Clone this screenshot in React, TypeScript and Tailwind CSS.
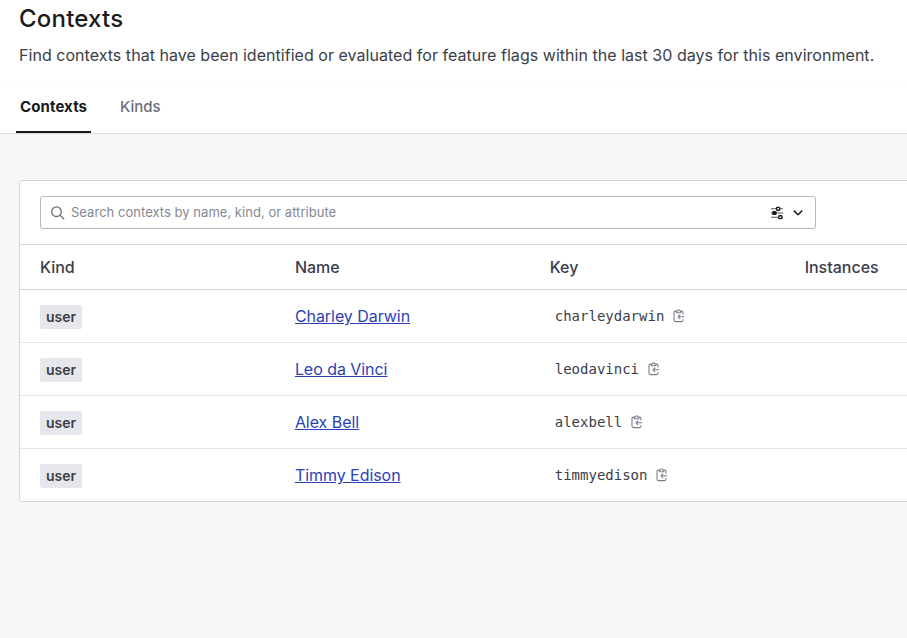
import React from "react";

const contexts = [
  { kind: "user", name: "Charley Darwin", key: "charleydarwin" },
  { kind: "user", name: "Leo da Vinci", key: "leodavinci" },
  { kind: "user", name: "Alex Bell", key: "alexbell" },
  { kind: "user", name: "Timmy Edison", key: "timmyedison" },
];

function SearchIcon() {
  return (
    <svg className="h-4 w-4 shrink-0 text-[#6c6e79]" viewBox="0 0 16 16" fill="none" stroke="currentColor" strokeWidth="1.3">
      <circle cx="6.5" cy="6.7" r="4.8" />
      <path d="M10 10.2 14.2 14.4" />
    </svg>
  );
}

function FilterIcon() {
  return (
    <svg className="h-3.5 w-3.5" viewBox="0 0 14 14" fill="none" stroke="#1d1d1f" strokeWidth="1.1">
      <path d="M1 2.8h5.2M9.8 2.8H13M1 7h12M1 11.2h7.2M11.8 11.2H13" strokeOpacity="0.75" />
      <rect x="6.6" y="1.4" width="3" height="2.8" rx="0.6" strokeWidth="1.4" />
      <rect x="2.2" y="5" width="4.4" height="4" rx="1" fill="#1d1d1f" stroke="none" />
      <rect x="8.8" y="9.8" width="3" height="2.8" rx="0.6" strokeWidth="1.4" />
    </svg>
  );
}

function ChevronIcon() {
  return (
    <svg className="h-3 w-3" viewBox="0 0 12 12" fill="none" stroke="#1d1d1f" strokeWidth="1.5">
      <path d="m1.8 3.6 4.2 4.2 4.2-4.2" />
    </svg>
  );
}

function CopyIcon() {
  return (
    <svg className="h-[14px] w-[12px]" viewBox="0 0 12 14" fill="none" stroke="#7d7f8b" strokeWidth="1.1" strokeLinecap="round" strokeLinejoin="round">
      <path d="M3.3 2.1h-.8C1.6 2.1 1 2.7 1 3.6v7.5c0 .9.6 1.5 1.5 1.5h6c.9 0 1.5-.6 1.5-1.5v-.6M8 2.1h.5c.9 0 1.5.6 1.5 1.5v1.3" />
      <path d="M3.5 2h1c.1-.8.5-1.2 1.1-1.2S6.6 1.2 6.7 2h1v1.8H3.5z" />
      <path d="M10.8 7.8H5M6.8 6 5 7.8l1.8 1.8" />
    </svg>
  );
}

export default function App() {
  return (
    <div className="flex h-[638px] w-full flex-col overflow-hidden bg-[#f7f7f7] font-['Inter',sans-serif] text-[#3b3d47]">
      <header className="h-[134px] shrink-0 border-b border-[#dadbdd] bg-white">
        <h1 className="h-[41px] pl-[19px] pt-[5px] text-2xl leading-7 font-medium tracking-[0.2px] text-[#1b1b1d]">Contexts</h1>
        <p className="h-[42px] border-b border-[#fbfbfb] pl-[19px] pt-0.5 text-base leading-6 tracking-[0.035px] whitespace-nowrap">
          Find contexts that have been identified or evaluated for feature flags within the last 30 days for this environment.
        </p>
        <nav className="flex h-[50px] gap-[25px] pl-4 text-[15px] leading-5">
          <a className="w-[75px] border-b-2 border-[#18191b] pl-1 pt-3.5 font-bold tracking-[0.1px] text-[#18191b]">Contexts</a>
          <a className="pl-1 pt-3.5 font-medium text-[#6c6e7b]">Kinds</a>
        </nav>
      </header>

      <main className="pl-[19px] pt-[46px]">
        <section className="w-[1041.5px] rounded-[3px] border border-[#d4d5d9] bg-white">
          <div className="h-16 border-b border-[#d4d5d9] pl-5 pt-[15px]">
            <div className="flex h-[33px] w-[776px] items-center rounded-[3px] border border-[#b7b9c1] pl-[9px] pr-[11px]">
              <SearchIcon />
              <span className="-mt-px ml-[5px] flex-1 text-[13px] leading-5 tracking-[0.03px] text-[#858792]">Search contexts by name, kind, or attribute</span>
              <FilterIcon />
              <span className="ml-2"><ChevronIcon /></span>
            </div>
          </div>
          <div className="grid h-[45px] grid-cols-4 items-center border-b border-[#d4d5d9] pl-5 text-base font-medium">
            <span>Kind</span>
            <span>Name</span>
            <span>Key</span>
            <span>Instances</span>
          </div>
          {contexts.map((context) => (
            <div key={context.key} className="grid h-[53px] grid-cols-4 items-center border-b border-[#e6e7ec] pl-5 last:h-[52px] last:border-b-0">
              <span className="mt-0.5 flex h-6 w-[42px] items-center justify-center rounded-[2px] bg-[#e6e7ed] text-sm font-semibold">{context.kind}</span>
              <a className="text-base leading-6 tracking-[-0.05px] text-[#2c3fb8] underline">{context.name}</a>
              <div className="flex items-center pl-[5px]">
                <span className="font-['DejaVu_Sans_Mono',monospace] text-sm leading-5">{context.key}</span>
                <span className="ml-[9px]"><CopyIcon /></span>
              </div>
              <span />
            </div>
          ))}
        </section>
      </main>
    </div>
  );
}
